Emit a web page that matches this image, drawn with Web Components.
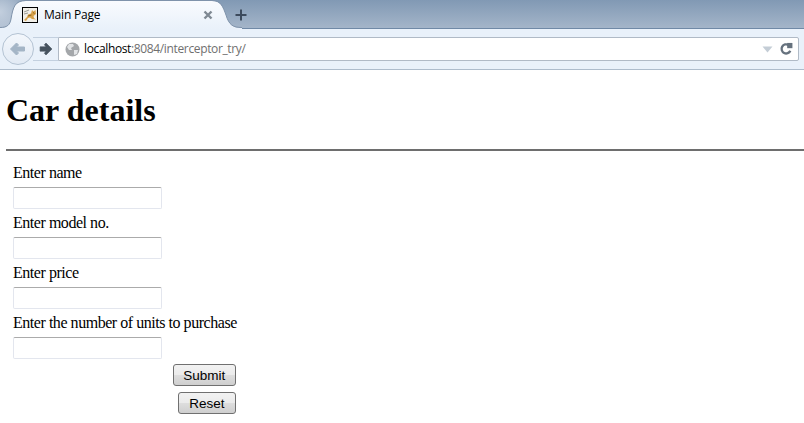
<!DOCTYPE html>
<html>
<head>
<meta charset="utf-8">
<title>Main Page</title>
<style>
  html, body { margin: 0; padding: 0; background: #fff; overflow: hidden; }
</style>
</head>
<body>
<browser-window>
  <car-page title-text="Car details">
    <car-field label="Enter name"></car-field>
    <car-field label="Enter model no."></car-field>
    <car-field label="Enter price"></car-field>
    <car-field label="Enter the number of units to purchase"></car-field>
    <form-button slot="actions" label="Submit" width="63"></form-button>
    <form-button slot="actions" label="Reset" width="58"></form-button>
  </car-page>
</browser-window>

<script>
class BrowserTabs extends HTMLElement {
  constructor() {
    super();
    this.attachShadow({ mode: 'open' });
  }

  connectedCallback() {
    this.shadowRoot.innerHTML = `
      <style>
        :host {
          display: flex;
          height: 28px;
          position: relative;
          z-index: 1;
          background:
            radial-gradient(ellipse 34px 34px at 0 12px, #c3cfde 0%, rgba(195,207,222,0) 100%),
            linear-gradient(180deg, #8199b4 0%, #a4b5c9 100%);
          font-family: "Open Sans", "Noto Sans", sans-serif;
          font-size: 12px;
          letter-spacing: -.2px;
          color: #000;
        }
        .shape { position: absolute; left: 0; top: 0; }
        .tab {
          position: relative;
          margin-left: 22px;
          width: 194px;
          height: 28px;
          box-sizing: border-box;
          padding-top: 2px;
          display: flex;
          align-items: center;
          gap: 6px;
        }
        .title { padding-bottom: 2px; flex: 1; }
        .close { margin-right: 3px; }
        .plus { position: relative; margin-left: 19px; margin-top: 9px; }
      </style>
      <svg class="shape" width="260" height="29" viewBox="0 0 260 29">
        <defs>
          <linearGradient id="tabbg" x1="0" y1="0" x2="0" y2="1">
            <stop offset="0" stop-color="#f9fbfe"/>
            <stop offset="1" stop-color="#e9f1fa"/>
          </linearGradient>
        </defs>
        <path d="M0 28 C7 28 10 25 11 19 C13 7 15 1 26 1 L212 1 C221 1 223 7 226 15 C229 25 233 28 242 28 V29 H0 Z" fill="url(#tabbg)"/>
        <path d="M0 27.500 C7 27.500 10 25 11 19 C13 7 15 .5 26 .5 L212 .5 C221 .5 223 7 226 15 C229 25 233 27.500 242 27.500" fill="none" stroke="#7f93ab" stroke-width="1"/>
      </svg>
      <div class="tab">
        <svg width="16" height="16" viewBox="0 0 16 16">
          <rect x=".5" y=".5" width="15" height="15" fill="#f1efe9" stroke="#000"/>
          <path d="M2 5 L7 3 M2 7 L6 6" stroke="#9a9a94" stroke-width="1" fill="none"/>
          <path d="M2 13 L5 10 L6 7.500 L9 6.500 L10 3 L11.500 4.500 L13.500 3 L14 7 L11.500 9 L12 11 L14 12.500 L10 12 L8 10.500 L6 11 L4 14 Z" fill="#d8a24a"/>
          <path d="M6 9 L9.500 8 M11 5.500 L12.500 6.500" stroke="#8f6420" stroke-width="1"/>
        </svg>
        <span class="title">Main Page</span>
        <svg class="close" width="10" height="10" viewBox="0 0 10 10">
          <path d="M1.500 1.500 L8.500 8.500 M8.500 1.500 L1.500 8.500" stroke="#7f8993" stroke-width="2.400"/>
        </svg>
      </div>
      <svg class="plus" width="12" height="12" viewBox="0 0 12 12">
        <path d="M6 .5 V11.500 M.5 6 H11.500" stroke="#3c4a5c" stroke-width="2"/>
      </svg>
    `;
  }
}

class BrowserToolbar extends HTMLElement {
  constructor() {
    super();
    this.attachShadow({ mode: 'open' });
  }

  connectedCallback() {
    this.shadowRoot.innerHTML = `
      <style>
        :host {
          display: flex;
          align-items: center;
          height: 42px;
          box-sizing: border-box;
          padding: 0 5px 0 2px;
          background: #e9f1fa;
          border-bottom: 1px solid #adbccc;
          border-top: 1px solid #7089a6;
          font-family: "Open Sans", "Noto Sans", sans-serif;
          font-size: 12px;
          letter-spacing: -.36px;
        }
        .back {
          width: 32px;
          height: 32px;
          box-sizing: border-box;
          border: 1px solid #b4c3d3;
          border-radius: 50%;
          background: linear-gradient(180deg, #f3f7fc, #e2eaf4);
          display: flex;
          align-items: center;
          justify-content: center;
          position: relative;
          z-index: 1;
          flex: none;
        }
        .fwd {
          width: 25px;
          height: 24px;
          box-sizing: border-box;
          margin-left: -1px;
          padding-left: 6px;
          display: flex;
          align-items: center;
          border-top: 1px solid #c3d0df;
          border-bottom: 1px solid #c3d0df;
          flex: none;
        }
        .url {
          flex: 1;
          height: 24px;
          box-sizing: border-box;
          background: #fff;
          border: 1px solid #b0bac6;
          border-radius: 0 2px 2px 0;
          display: flex;
          align-items: center;
          padding: 0 5px 0 6px;
        }
        .globe { margin-right: 4px; flex: none; }
        .host { color: #000; }
        .rest { color: #6f6f6f; }
        .text { flex: 1; padding-bottom: 1px; }
        .star { margin-right: 6px; }
      </style>
      <div class="back">
        <svg width="18" height="16" viewBox="0 0 18 16">
          <path d="M1.500 8 L7.500 2 L9.500 4 L7.500 6 H15.500 V10 H7.500 L9.500 12 L7.500 14 Z" fill="#a4b5c6" stroke="#a4b5c6" stroke-linejoin="round"/>
        </svg>
      </div>
      <div class="fwd">
        <svg width="14" height="14" viewBox="0 0 13 13">
          <path d="M12 6.500 L6.500 1 L5 2.500 L6.500 4.500 H1 V8.500 H6.500 L5 10.500 L6.500 12 Z" fill="#46535f" stroke="#46535f" stroke-width=".6" stroke-linejoin="round"/>
        </svg>
      </div>
      <div class="url">
        <svg class="globe" width="15" height="15" viewBox="0 0 15 15">
          <circle cx="7.500" cy="7.500" r="7" fill="#a4a7aa"/>
          <path d="M4 2 L8 2 L9 4 L6 6 L7 8 L4 8 L2 5 Z M9 8 L13 8 L12 12 L9 13 Z" fill="#e2e4e6"/>
        </svg>
        <span class="text"><span class="host">localhost</span><span class="rest">:8084/interceptor_try/</span></span>
        <svg class="star" width="11" height="7" viewBox="0 0 11 7">
          <path d="M.5 .5 H10.500 L5.500 6.500 Z" fill="#c4cdd6"/>
        </svg>
        <svg width="14" height="14" viewBox="0 0 12 12">
          <path d="M9.700 7.500 A3.900 3.900 0 1 1 8.200 2.600" fill="none" stroke="#66727e" stroke-width="2"/>
          <path d="M7 .8 L11.500 .8 V5.300 H7 Z" fill="#66727e"/>
        </svg>
      </div>
    `;
  }
}

class BrowserWindow extends HTMLElement {
  constructor() {
    super();
    this.attachShadow({ mode: 'open' });
  }

  connectedCallback() {
    this.shadowRoot.innerHTML = `
      <style>
        :host { display: block; width: 804px; height: 423px; overflow: hidden; background: #fff; }
      </style>
      <browser-tabs></browser-tabs>
      <browser-toolbar></browser-toolbar>
      <slot></slot>
    `;
  }
}

class CarPage extends HTMLElement {
  constructor() {
    super();
    this.attachShadow({ mode: 'open' });
  }

  connectedCallback() {
    const title = this.getAttribute('title-text');
    this.shadowRoot.innerHTML = `
      <style>
        :host {
          display: block;
          padding: 0 0 0 6px;
          font-family: "Liberation Serif", "Times New Roman", serif;
          font-size: 16px;
          color: #000;
        }
        h1 {
          font-size: 32px;
          line-height: 37px;
          font-weight: bold;
          margin: 0;
          padding: 22px 0 20px 0;
        }
        hr {
          margin: 0;
          height: 0;
          border: 0;
          border-top: 2px solid #6e6e6e;
        }
        .form {
          display: inline-flex;
          flex-direction: column;
          padding: 13px 0 0 7px;
        }
        .actions {
          display: flex;
          flex-direction: column;
          align-items: flex-end;
          gap: 6px;
          padding: 0 1px 0 0;
        }
      </style>
      <h1>${title}</h1>
      <hr>
      <div class="form">
        <slot></slot>
        <div class="actions"><slot name="actions"></slot></div>
      </div>
    `;
  }
}

class CarField extends HTMLElement {
  constructor() {
    super();
    this.attachShadow({ mode: 'open' });
  }

  connectedCallback() {
    this.shadowRoot.innerHTML = `
      <style>
        :host { display: block; height: 50px; }
        label { display: block; height: 18px; line-height: 18px; white-space: nowrap; margin-bottom: 5px; letter-spacing: -.46px; }
        input {
          display: block;
          width: 149px;
          height: 22px;
          box-sizing: border-box;
          padding: 1px 2px;
          background: #fff;
          border: 1px solid #e3e6ee;
          border-top-color: #ababab;
          border-radius: 2px;
          outline: none;
        }
      </style>
      <label>${this.getAttribute('label')}</label>
      <input type="text">
    `;
  }
}

class FormButton extends HTMLElement {
  constructor() {
    super();
    this.attachShadow({ mode: 'open' });
  }

  connectedCallback() {
    const width = this.getAttribute('width');
    this.shadowRoot.innerHTML = `
      <style>
        :host { display: block; }
        button {
          display: block;
          width: ${width}px;
          height: 22px;
          box-sizing: border-box;
          padding: 0;
          font-family: "Liberation Sans", Arial, sans-serif;
          font-size: 13.5px;
          color: #000;
          border: 1px solid #707070;
          border-radius: 3px;
          background: linear-gradient(180deg, #f2f2f2 0%, #ebebeb 48%, #dddddd 52%, #cfcfcf 100%);
        }
      </style>
      <button type="button">${this.getAttribute('label')}</button>
    `;
  }
}

customElements.define('browser-tabs', BrowserTabs);
customElements.define('browser-toolbar', BrowserToolbar);
customElements.define('browser-window', BrowserWindow);
customElements.define('car-page', CarPage);
customElements.define('car-field', CarField);
customElements.define('form-button', FormButton);
</script>
</body>
</html>
